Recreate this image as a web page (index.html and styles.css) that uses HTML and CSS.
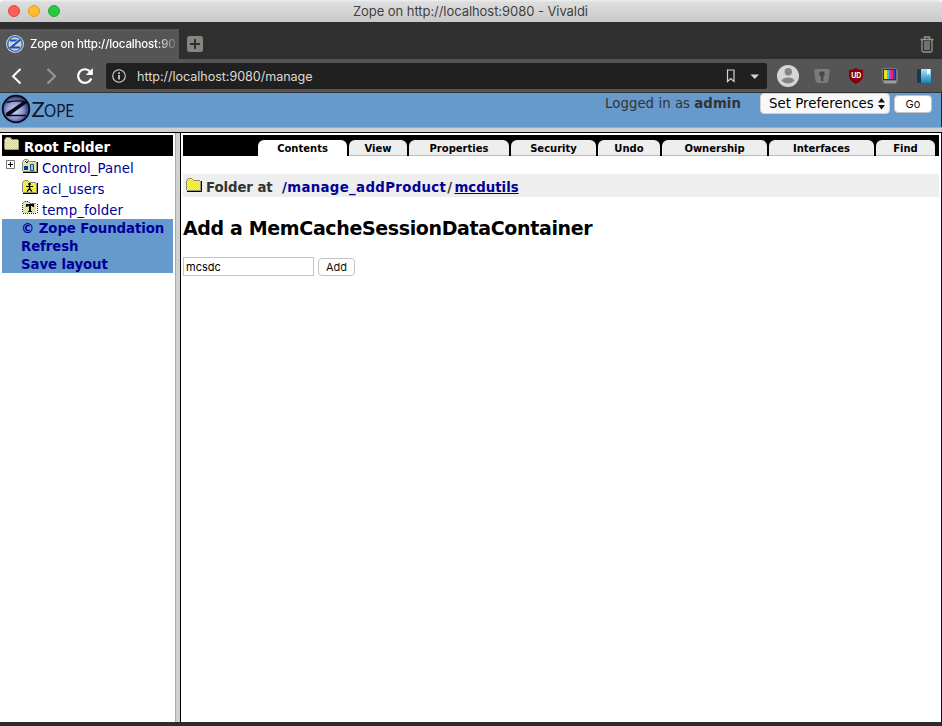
FILE: index.html
```html
<!DOCTYPE html>
<html lang="en">
<head>
<meta charset="utf-8">
<title>Zope on http://localhost:9080</title>
<link rel="stylesheet" href="styles.css">
</head>
<body>
<svg width="0" height="0" class="defs" aria-hidden="true">
  <defs>
    <pattern id="dither" width="2" height="2" patternUnits="userSpaceOnUse">
      <rect width="2" height="2" fill="#ffff4a"/><rect width="1" height="1" fill="#d2d29a"/><rect x="1" y="1" width="1" height="1" fill="#d2d29a"/>
    </pattern>
    <radialGradient id="orb" cx=".45" cy=".55" r=".55"><stop offset="0" stop-color="#d3d6fb"/><stop offset=".55" stop-color="#9298d2"/><stop offset="1" stop-color="#2a3060"/></radialGradient>
    <linearGradient id="book" x2="0" y2="1"><stop offset="0" stop-color="#b5e5f8"/><stop offset="1" stop-color="#1482b8"/></linearGradient>
    <symbol id="folder" viewBox="0 0 16 16">
      <path d="M1 13V3l1-2h4l2 2h6v10z" fill="url(#dither)"/>
      <path d="M.5 13V3.500L2.500 1.500H5.500L7.500 3.500H14" fill="none" stroke="#888"/>
      <path d="M1 14.500H15.500V4" fill="none" stroke="#000"/><path d="M1 13.500H14.500V4" fill="none" stroke="#999970"/>
    </symbol>
  </defs>
</svg>
<div class="window">
  <header class="titlebar">
    <i class="light red"></i><i class="light amber"></i><i class="light green"></i>
    <span class="window-title">Zope on http://localhost:9080 - Vivaldi</span>
  </header>
  <div class="tabstrip">
    <div class="browser-tab">
      <svg width="18" height="18" viewBox="0 0 18 18"><circle cx="9" cy="9" r="9" fill="#d4d2cd"/><circle cx="9" cy="9" r="7.300" fill="none" stroke="#2464c8" stroke-width="1.300"/><path d="M4 5.500H13L5 12.500H14" fill="none" stroke="#1855c4" stroke-width="2.200"/><path d="M3.500 11.500L13 4" stroke="#eee" stroke-width=".7"/></svg>
      <span>Zope on http://localhost:90</span>
    </div>
    <svg class="new-tab" width="16" height="16" viewBox="0 0 16 16"><rect width="16" height="16" rx="2.500" fill="#88847f"/><path d="M8 3V13M3 8H13" stroke="#2f2f2f" stroke-width="2"/></svg>
    <svg class="trash" width="14" height="17" viewBox="0 0 14 17"><path d="M.5 3.500H13.500M4.500 3V1H9.500V3M2 4V14.500Q2 16 3.500 16H10.500Q12 16 12 14.500V4M5 5V14M7 5V14M9 5V14" fill="none" stroke="#99948d" stroke-width="1.300"/></svg>
  </div>
  <div class="toolbar">
    <svg class="nav" width="106" height="33" viewBox="0 59 106 33" fill="none">
      <path d="M20.500 69L13 76.200L20.500 83.500" stroke="#fff" stroke-width="2"/>
      <path d="M47.500 69L55 76.200L47.500 83.500" stroke="#989898" stroke-width="2"/>
      <path d="M90 71.500A6.800 6.800 0 1 0 91.300 78.500" stroke="#fff" stroke-width="2.200"/><path d="M92.800 68V75H85.800z" fill="#fff"/>
    </svg>
    <div class="address">
      <svg width="14" height="14" viewBox="0 0 14 14" fill="none" stroke="#d8d4ce"><circle cx="7" cy="7" r="6.300" stroke-width="1.100"/><path d="M7 6V10.500" stroke-width="1.700"/><path d="M7 3.300V5" stroke-width="1.700"/></svg>
      <span class="url">http://localhost:9080/manage</span>
      <svg class="address-tools" width="34" height="14" viewBox="0 0 34 14"><path d="M1.500 1H8V12.500L4.700 9.500L1.500 12.500z" fill="none" stroke="#d8d4ce" stroke-width="1.200"/><path d="M24.500 5.500H33L28.700 10z" fill="#d8d4ce"/></svg>
    </div>
    <svg class="extensions" width="175" height="33" viewBox="767 59 175 33">
      <circle cx="788" cy="76" r="11" fill="#d6d6d6"/><circle cx="788.300" cy="71.800" r="3.700" fill="#858585"/><path d="M781.500 80.500Q783 77.500 788 77.500T794.500 80.500Q792 83.500 788 83.500T781.500 80.500" fill="#858585"/>
      <path d="M816 69H828Q830 69 829.800 71L828.500 81Q828 83 826 83H818Q816 83 815.500 81L814.200 71Q814 69 816 69" fill="#7b7b7b"/><circle cx="822" cy="74" r="2.700" fill="#484848"/><path d="M821 75H823.300V81H821z" fill="#484848"/>
      <path d="M849 70Q853 70 855.800 68Q859 70 863 70V75Q863 81 855.800 84Q849 81 849 75z" fill="#850006"/><text x="851.200" y="78.200" class="shield-label">UD</text>
      <path d="M882 68H896L898 71V82L896 84H884L882 80z" fill="#777"/><path d="M883 69H896V80H883z" fill="#333"/><path d="M884 70H887V79H884z" fill="#f1df23"/><path d="M887 70H889V79H887z" fill="#20d3d5"/><path d="M889 70H891V79H889z" fill="#ef22da"/><path d="M891 70H893V79H891z" fill="#e43535"/><path d="M893 70H895V79H893z" fill="#3140d5"/><path d="M884 82H896" stroke="#aaa" stroke-width="1.500"/>
      <path d="M917 69H922V83H917z" fill="#183956"/><path d="M921 69H931V83H921z" fill="url(#book)"/><path d="M927 69H930V75L928.500 73.500L927 75z" fill="#fff"/>
    </svg>
  </div>
  <div class="zope-header">
    <svg class="zope-logo" width="80" height="32" viewBox="0 0 80 32">
      <circle cx="16" cy="16" r="13.300" fill="url(#orb)" stroke="#05091b" stroke-width="1.800"/><path d="M6.500 9.500Q16 6.500 25.500 9M6.500 22.500H26" fill="none" stroke="#05091b" stroke-width="1.400"/><path d="M6 20L24 8L27.500 9.500L9.500 22.500H6z" fill="#05091b"/>
      <text x="31.500" y="23.500" class="logo-z">Z</text><text x="44" y="23.500" class="logo-ope" textLength="30" lengthAdjust="spacingAndGlyphs">OPE</text>
    </svg>
    <span class="login">Logged in as <b>admin</b></span>
    <div class="prefs"><span>Set Preferences</span><svg width="7" height="12" viewBox="0 0 7 12"><path d="M3.500 0L7 4.500H0zM0 7H7L3.500 11.500z" fill="#111"/></svg></div>
    <button class="go">Go</button>
  </div>
  <div class="frame-bar"></div>
  <div class="frames">
    <nav class="tree">
      <div class="root"><svg width="16" height="16"><use href="#folder"/></svg><b>Root Folder</b></div>
      <div class="node"><svg class="plus" width="9" height="9" viewBox="0 0 9 9"><path d="M.5.5H8.500V8.500H.5z" fill="#fff" stroke="#777"/><path d="M2 4.500H7M4.500 2V7" stroke="#000"/></svg>
        <svg width="16" height="16"><use href="#folder"/><path d="M2 8H6V12H2z" fill="#063c91"/><path d="M8.500 6.500H11.500V12.500H8.500z" fill="#9ccbe0" stroke="#104a90"/><path d="M3 3L5 5L6 3" stroke="#222" fill="none"/></svg><a>Control_Panel</a></div>
      <div class="node"><svg width="16" height="16"><use href="#folder"/><circle cx="7.500" cy="5" r="1.300"/><path d="M4 7.500H11M7.500 6V9.500L5 12.500M7.500 9.500L10 12.500" fill="none" stroke="#000" stroke-width="1.200"/></svg><a>acl_users</a></div>
      <div class="node"><svg width="16" height="16"><path d="M1 13V3l1-2h4l2 2h6v10z" fill="url(#dither)"/><path d="M.5 12V3.500L2.500 1.500H6.500L8.500 3.500H14M15.500 4V14M1 13.500H15" fill="none" stroke="#222" stroke-dasharray="1 1"/><path d="M4 4H12V7H10.500V6H9V11H10V12H6V11H7V6H5.500V7H4z"/></svg><a>temp_folder</a></div>
      <div class="tree-links"><a>© Zope Foundation</a><a>Refresh</a><a>Save layout</a></div>
    </nav>
    <div class="splitter"></div>
    <main class="workspace">
      <div class="manage-tabs"><a class="t1 active"><span>Contents</span></a><a class="t2"><span>View</span></a><a class="t3"><span>Properties</span></a><a class="t4"><span>Security</span></a><a class="t5"><span>Undo</span></a><a class="t6"><span>Ownership</span></a><a class="t7"><span>Interfaces</span></a><a class="t8"><span>Find</span></a></div>
      <div class="crumbs"><svg width="16" height="16"><use href="#folder"/></svg><span class="at">Folder at</span><span class="path"><a>/manage_addProduct</a><span class="slash">/</span><a class="current">mcdutils</a></span></div>
      <h1><span>Add a MemCacheSessionDataContainer</span></h1>
      <form class="add-form"><input type="text" value="mcsdc"><button type="button">Add</button></form>
    </main>
  </div>
  <footer class="window-bottom"></footer>
</div>
</body>
</html>
```
FILE: styles.css
```css
* { box-sizing: border-box; }
body { margin: 0; background: #fff; font-family: "DejaVu Sans", sans-serif; overflow: hidden; }
svg { display: block; flex: none; }
.defs { position: absolute; }
.window { width: 942px; height: 726px; display: flex; flex-direction: column; white-space: nowrap; }
.titlebar { height: 22px; flex: none; display: flex; align-items: center; gap: 8px; padding-left: 8px; background: linear-gradient(#f0f0f0 0, #dedede 2px, #c9c9c9 100%); border-radius: 4px 4px 0 0; font: 13px Inter, sans-serif; color: #414141; }
.light { width: 12px; height: 12px; border-radius: 50%; border: 1px solid; }
.red { background: #ff5f57; border-color: #df4843; }
.amber { background: #ffbd2e; border-color: #dd9f25; }
.green { background: #28c941; border-color: #21ad36; }
.window-title { margin-left: 285px; letter-spacing: -.06px; }
.tabstrip { height: 37px; flex: none; display: flex; align-items: center; background: #2f2f2f; }
.browser-tab { align-self: flex-end; width: 179px; height: 30px; padding-left: 6px; display: flex; align-items: center; gap: 6px; background: #555; color: #fff; font: 500 11.5px Inter, sans-serif; letter-spacing: -.16px; }
.browser-tab span { width: 148px; -webkit-mask-image: linear-gradient(90deg, #000 125px, transparent 150px); mask-image: linear-gradient(90deg, #000 125px, transparent 150px); }
.new-tab { margin: 7px 0 0 8px; }
.trash { margin: 7px 8px 0 auto; }
.toolbar { height: 34px; flex: none; display: flex; background: #555; border-bottom: 1px solid #333; }
.address { width: 661px; height: 26px; margin-top: 4px; padding: 0 7px 0 6px; border-radius: 2px; background: #202020; display: flex; align-items: center; color: #dedad3; font: 12.6px Inter, sans-serif; letter-spacing: -.05px; }
.url { margin: 1px 0 0 11px; }
.address-tools { margin-left: auto; }
.shield-label { font: bold 7px Inter, sans-serif; fill: #fff; letter-spacing: 0; }
.zope-header { height: 34px; flex: none; display: flex; align-items: flex-start; background: #69c; border-right: 1px solid #223; color: #333; font-size: 13.3px; }
.logo-z { font: 22px Lato, sans-serif; fill: #0b1930; }
.logo-ope { font: 17px Lato, sans-serif; fill: #0b1930; }
.login { width: 136px; margin: 3px 19px 0 525px; letter-spacing: .05px; }
.prefs { width: 130px; height: 21px; padding: 0 4px 0 8px; display: flex; align-items: center; justify-content: space-between; background: #f8f8f8; border: 1px solid #d2d2d2; border-radius: 4px; color: #000; letter-spacing: .03px; }
button { padding: 0; background: #fff; border: 1px solid #c4c4c4; border-radius: 4px; color: #111; font: 11px Inter, sans-serif; }
.go { width: 38px; height: 18px; margin: 2px 0 0 4px; }
.frame-bar { height: 6px; flex: none; background: #d0d0d0; border-top: 1px solid #aaa; border-bottom: 1px solid #000; }
.frames { flex: 1; display: flex; border-right: 1px solid #111; background: #fff; min-height: 0; }
.tree { width: 175px; padding: 2px 2px 0; font-size: 13.3px; color: #009; }
.root { height: 21px; padding: 1px 0 0 2px; display: flex; gap: 4px; background: #000; color: #fff; }
.root b { margin-top: 4px; letter-spacing: -.08px; line-height: 15px; }
.node { height: 21px; display: flex; padding: 2px 0 0 20px; gap: 4px; }
.node a { margin-top: 3px; letter-spacing: .1px; }
.node .plus { margin: 2px 3px 0 -16px; }
.tree-links { display: flex; flex-direction: column; padding-left: 19px; background: #69c; font-weight: bold; letter-spacing: -.08px; }
.tree-links a { height: 18px; line-height: 20px; }
.splitter { width: 6px; background: #d0d0d0; border-left: 1px solid #aaa; border-right: 1px solid #000; }
.workspace { width: 760px; padding: 2px 2px 0; }
.manage-tabs { height: 21px; padding: 5px 4px 0 75px; display: flex; gap: 2px; background: #000; font-size: 10px; font-weight: bold; }
.manage-tabs a { display: flex; justify-content: center; background: #eee; border-radius: 6px 6px 0 0; border-bottom: 1px solid #bbb; padding-top: 3px; color: #000; line-height: 12px; }
.manage-tabs .active { background: #fff; border-color: #fff; }
.t1 { width: 89px; } .t2 { width: 58px; } .t3 { width: 100px; } .t4 { width: 85px; }
.t5 { width: 62px; } .t6 { width: 105px; } .t7 { width: 105px; } .t8 { width: 59px; }
.crumbs { height: 23px; margin-top: 18px; padding: 3px 0 0 3px; display: flex; background: #eee; color: #333; font-size: 13.3px; font-weight: bold; }
.at { width: 76px; margin: 3px 0 0 4px; letter-spacing: -.08px; }
.path { margin-top: 3px; letter-spacing: .35px; }
.path a { color: #009; }
.slash { margin: 0 2px 0 1px; }
.path .current { text-decoration: underline; letter-spacing: 0; }
h1 { margin: 20px 0 0; height: 40px; font-size: 19px; line-height: 23px; letter-spacing: -.36px; color: #000; }
.add-form { display: flex; align-items: center; gap: 4px; margin: 0; }
.add-form input { width: 131px; height: 19px; padding: 0 2px; border: 1px solid #c5c5c5; font: 11px Inter, sans-serif; }
.add-form button { width: 37px; height: 18px; margin-top: 1px; }
.window-bottom { height: 4px; flex: none; background: #2d2b2c; }
```
